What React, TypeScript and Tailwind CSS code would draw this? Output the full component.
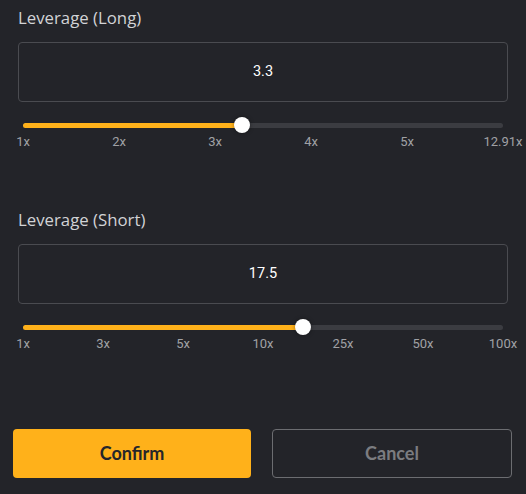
import React from "react";

interface LeverageSliderProps {
    label: string;
    value: string;
    percent: number;
    marks: string[];
}

function LeverageSlider({ label, value, percent, marks }: LeverageSliderProps) {
    return (
        <section className="flex flex-col">
            <h2 className="text-[16.8px] leading-[24px] text-[#d2d3d6] font-['Open_Sans',sans-serif]">
                {label}
            </h2>
            <div className="mt-[12px] h-[60px] rounded-[4px] border border-[#4a4b50] flex items-center justify-center">
                <span className="text-[14.5px] text-white font-['Roboto',sans-serif]">
                    {value}
                </span>
            </div>
            <div className="mt-[15px] mx-[5px] relative h-[16px] flex items-center">
                <div className="h-[5px] w-full rounded-full bg-[#3b3c41]">
                    <div
                        className="h-full rounded-full bg-[#ffb11a]"
                        style={{ width: `${percent}%` }}
                    />
                </div>
                <div
                    className="absolute top-0 w-[16px] h-[16px] -ml-[8px] rounded-full bg-white shadow-[0_0_4px_rgba(0,0,0,0.4)]"
                    style={{ left: `${percent}%` }}
                />
            </div>
            <div className="mx-[5px] mt-[2px] flex justify-between text-[13px] leading-[14px] text-[#a0a1a5] font-['Roboto',sans-serif]">
                {marks.map((m) => (
                    <div key={m} className="w-0 flex justify-center">
                        <span className="whitespace-nowrap">{m}</span>
                    </div>
                ))}
            </div>
        </section>
    );
}

export default function App() {
    return (
        <div className="w-[526px] h-[494px] bg-[#232429] flex flex-col overflow-hidden">
            <div className="px-[18px] pt-[6px] flex flex-col gap-[59px]">
                <LeverageSlider
                    label="Leverage (Long)"
                    value="3.3"
                    percent={45.6}
                    marks={["1x", "2x", "3x", "4x", "5x", "12.91x"]}
                />
                <LeverageSlider
                    label="Leverage (Short)"
                    value="17.5"
                    percent={58.33}
                    marks={["1x", "3x", "5x", "10x", "25x", "50x", "100x"]}
                />
            </div>
            <div className="mt-auto mb-[16px] pl-[13px] pr-[14px] flex gap-[21px]">
                <button className="flex-1 h-[49px] rounded-[4px] bg-[#ffb11a] text-[#25262b] text-[18px] font-bold font-['Lato',sans-serif]">
                    Confirm
                </button>
                <button className="flex-1 h-[49px] rounded-[4px] border border-[#6c6d71] text-[#7b7c80] text-[18px] font-bold font-['Lato',sans-serif]">
                    Cancel
                </button>
            </div>
        </div>
    );
}
